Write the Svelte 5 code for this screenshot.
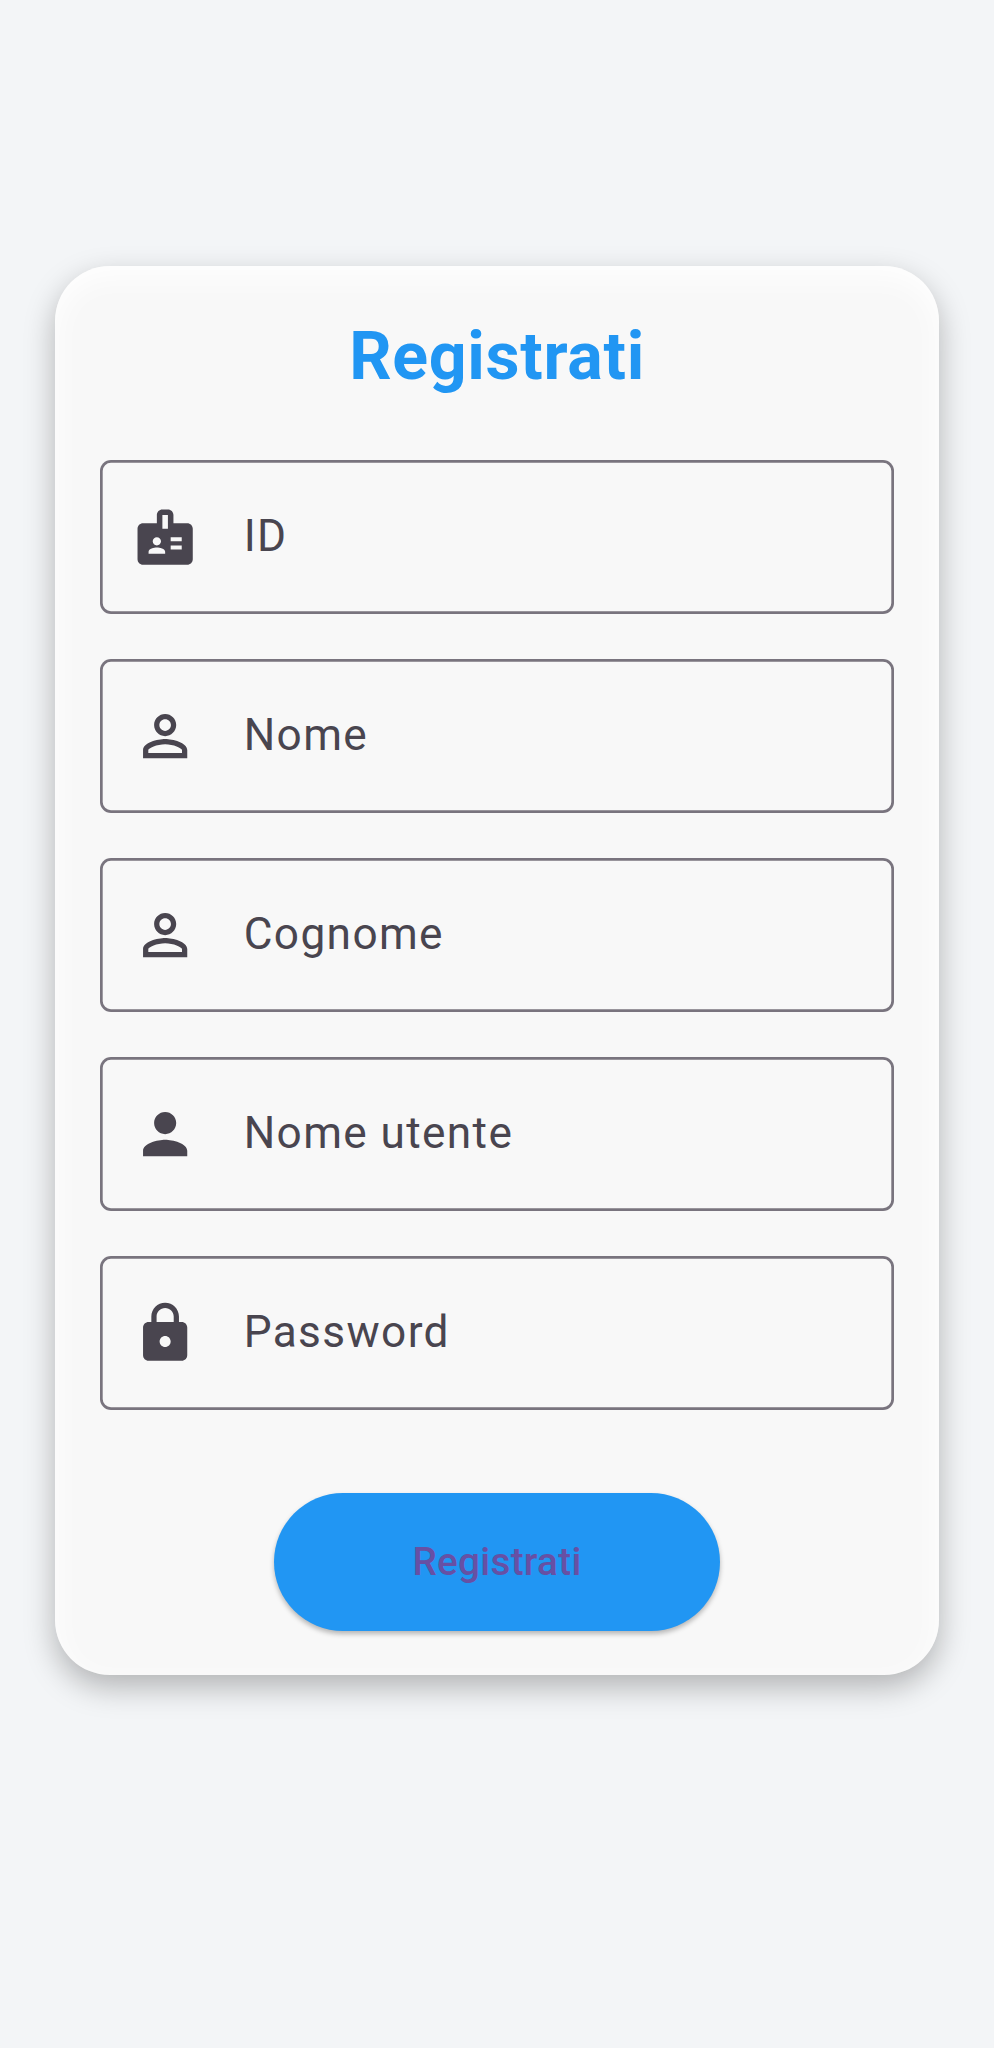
<script>
  const icons = {
    badge:
      'M20 7h-5V4c0-1.1-.9-2-2-2h-2c-1.1 0-2 .9-2 2v3H4c-1.1 0-2 .9-2 2v11c0 1.1.9 2 2 2h16c1.1 0 2-.9 2-2V9c0-1.1-.9-2-2-2zM9 12c.83 0 1.5.67 1.5 1.5S9.83 15 9 15s-1.5-.67-1.5-1.5S8.17 12 9 12zm3 6H6v-.75c0-1 2-1.5 3-1.5s3 .5 3 1.5V18zm1-9h-2V4h2v5zm5 7.5h-4V15h4v1.5zm0-3h-4V12h4v1.5z',
    outline:
      'M12 5.9c1.16 0 2.1.94 2.1 2.1s-.94 2.1-2.1 2.1S9.9 9.16 9.9 8s.94-2.1 2.1-2.1m0 9c2.97 0 6.1 1.46 6.1 2.1v1.1H5.9V17c0-.64 3.13-2.1 6.1-2.1M12 4C9.79 4 8 5.79 8 8s1.79 4 4 4 4-1.79 4-4-1.79-4-4-4zm0 9c-2.67 0-8 1.34-8 4v3h16v-3c0-2.66-5.33-4-8-4z',
    person:
      'M12 12c2.21 0 4-1.79 4-4s-1.79-4-4-4-4 1.79-4 4 1.79 4 4 4zm0 2c-2.67 0-8 1.34-8 4v2h16v-2c0-2.66-5.33-4-8-4z',
    lock:
      'M18 8h-1V6c0-2.76-2.24-5-5-5S7 3.24 7 6v2H6c-1.1 0-2 .9-2 2v10c0 1.1.9 2 2 2h12c1.1 0 2-.9 2-2V10c0-1.1-.9-2-2-2zm-6 9c-1.1 0-2-.9-2-2s.9-2 2-2 2 .9 2 2-.9 2-2 2zm3.1-9H8.9V6c0-1.71 1.39-3.1 3.1-3.1 1.71 0 3.1 1.39 3.1 3.1v2z'
  };

  const fields = [
    { label: 'ID', icon: 'badge' },
    { label: 'Nome', icon: 'outline' },
    { label: 'Cognome', icon: 'outline' },
    { label: 'Nome utente', icon: 'person' },
    { label: 'Password', icon: 'lock' }
  ];
</script>

<main>
  <form class="card">
    <h1>Registrati</h1>
    <div class="fields">
      {#each fields as field}
        <div class="field">
          <svg viewBox="0 0 24 24" aria-hidden="true">
            <path fill-rule="evenodd" d={icons[field.icon]} />
          </svg>
          <span>{field.label}</span>
        </div>
      {/each}
    </div>
    <button type="button">Registrati</button>
  </form>
</main>

<style>
  :global(body) {
    margin: 0;
    background: #f3f5f7;
  }

  main {
    box-sizing: border-box;
    width: 994px;
    height: 2048px;
    padding: 266px 55px 0;
    font-family: Roboto, sans-serif;
  }

  .card {
    box-sizing: border-box;
    height: 1409px;
    padding: 44px 44.6px;
    display: flex;
    flex-direction: column;
    align-items: center;
    border-radius: 55px;
    background: #f8f8f8;
    box-shadow:
      inset 0 10px 30px rgba(255, 255, 255, 0.95),
      0 12px 31px rgba(0, 0, 0, 0.27);
  }

  h1 {
    margin: 0;
    height: 93px;
    line-height: 93px;
    font-size: 66.3px;
    font-weight: 700;
    letter-spacing: 0.69px;
    color: #2196f3;
  }

  .fields {
    width: 100%;
    margin-top: 56.7px;
    display: flex;
    flex-direction: column;
    gap: 45px;
  }

  .field {
    box-sizing: border-box;
    height: 154px;
    padding-left: 32.8px;
    display: flex;
    align-items: center;
    gap: 45px;
    border-radius: 11px;
    box-shadow: inset 0 0 0 2.7px #79747e;
    color: #49454f;
  }

  .field svg {
    width: 66.3px;
    height: 66.3px;
    fill: currentColor;
  }

  .field span {
    margin-bottom: 2px;
    font-size: 44.2px;
    letter-spacing: 1.38px;
    line-height: 66px;
  }

  button {
    margin: 83.3px 0 0;
    width: 446px;
    height: 138px;
    padding: 0;
    border: 0;
    border-radius: 69px;
    background: #2196f3;
    box-shadow: 0 3px 5px rgba(0, 0, 0, 0.27);
    font: 500 38.7px Roboto, sans-serif;
    letter-spacing: 0.28px;
    color: #6750a4;
  }
</style>
